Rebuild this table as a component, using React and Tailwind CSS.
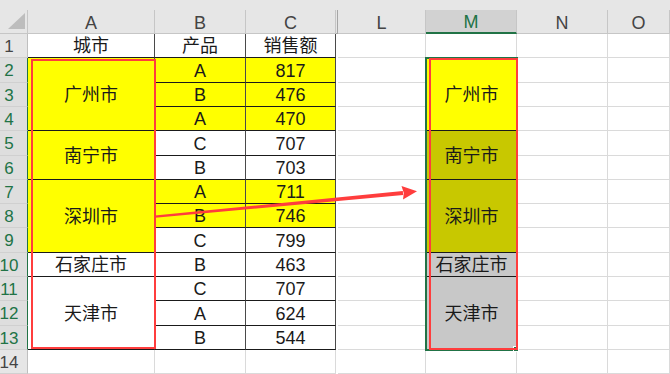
const H = {
  24: 'h-[24px]',
  25: 'h-[25px]',
  49: 'h-[49px]',
  73: 'h-[73px]',
};

const rowHeights = [24, 25, 24, 24, 25, 24, 24, 24, 25, 24, 24, 25, 24, 24];

const BG = {
  white: 'bg-white',
  yellow: 'bg-[#ffff00]',
  olive: 'bg-[#c8c800]',
  gray: 'bg-[#c8c8c8]',
};

const cityA = [
  { h: 24, text: '城市', bg: 'white' },
  { h: 73, text: '广州市', bg: 'yellow' },
  { h: 49, text: '南宁市', bg: 'yellow' },
  { h: 73, text: '深圳市', bg: 'yellow' },
  { h: 24, text: '石家庄市', bg: 'white' },
  { h: 73, text: '天津市', bg: 'white' },
];

const cityM = [
  { h: 73, text: '广州市', bg: 'yellow' },
  { h: 49, text: '南宁市', bg: 'olive' },
  { h: 73, text: '深圳市', bg: 'olive' },
  { h: 24, text: '石家庄市', bg: 'gray' },
  { h: 73, text: '天津市', bg: 'gray' },
];

const sales = [
  ['产品', '销售额', 'white'],
  ['A', '817', 'yellow'],
  ['B', '476', 'yellow'],
  ['A', '470', 'yellow'],
  ['C', '707', 'white'],
  ['B', '703', 'white'],
  ['A', '711', 'yellow'],
  ['B', '746', 'yellow'],
  ['C', '799', 'white'],
  ['B', '463', 'white'],
  ['C', '707', 'white'],
  ['A', '624', 'white'],
  ['B', '544', 'white'],
];

const ColHeader = ({ label, active }) => (
  <div
    className={
      active
        ? 'flex h-[24px] items-center justify-center border-b-2 border-r border-b-[#217346] border-r-[#c6c6c6] bg-[#d2d2d2] pt-[3px] text-[18px] text-[#217346]'
        : 'flex h-[24px] items-center justify-center border-b border-r border-[#c6c6c6] bg-[#e6e6e6] pt-[3px] text-[18px] text-[#444]'
    }
  >
    {label}
  </div>
);

const Blank = ({ h }) => <div className={`${H[h]} border-b border-r border-[#dadada] bg-white`} />;

const BlankColumn = ({ label, width }) => (
  <div className={`flex ${width} flex-col`}>
    <ColHeader label={label} />
    {rowHeights.map((h, i) => (
      <Blank key={i} h={h} />
    ))}
  </div>
);

const TableCell = ({ h, bg, children }) => (
  <div
    className={`flex ${H[h]} ${BG[bg]} items-center justify-center border-b border-r border-b-[#1a1a1a] border-r-[#4a4a4a] pt-[2px] text-[18px] text-[#1a1a1a]`}
  >
    {children}
  </div>
);

export default function App() {
  return (
    <div className="relative h-[374px] w-[670px] overflow-hidden bg-white font-['Liberation_Sans','Noto_Sans_CJK_SC',sans-serif]">
      <div className="h-[10px] bg-[#e6e6e6]" />
      <div className="flex">
        {/* row numbers */}
        <div className="flex w-[28px] flex-col">
          <div className="h-[24px] border-b border-r border-[#c6c6c6] bg-[#e6e6e6]">
            <svg width="28" height="24" viewBox="0 0 28 24">
              <polygon points="8,19 25,3 25,19" fill="#bdbdbd" />
            </svg>
          </div>
          {rowHeights.map((h, i) => {
            const on = i >= 1 && i <= 12;
            return (
              <div
                key={i}
                className={
                  on
                    ? `flex ${H[h]} items-center justify-center border-b border-r border-b-[#d0d0d0] border-r-[#217346] bg-[#dedede] pr-[9px] pt-[2px] text-[17px] text-[#217346]`
                    : `flex ${H[h]} items-center justify-center border-b border-r border-b-[#d0d0d0] border-r-[#bfbfbf] bg-[#e6e6e6] pr-[9px] pt-[2px] text-[17px] text-[#444]`
                }
              >
                {i + 1}
              </div>
            );
          })}
        </div>

        {/* A */}
        <div className="flex w-[127px] flex-col">
          <ColHeader label="A" />
          {cityA.map((c, i) => (
            <TableCell key={i} h={c.h} bg={c.bg}>
              {c.text}
            </TableCell>
          ))}
          <Blank h={24} />
        </div>

        {/* B */}
        <div className="flex w-[91px] flex-col">
          <ColHeader label="B" />
          {sales.map((r, i) => (
            <TableCell key={i} h={rowHeights[i]} bg={r[2]}>
              {r[0]}
            </TableCell>
          ))}
          <Blank h={24} />
        </div>

        {/* C */}
        <div className="flex w-[90px] flex-col">
          <ColHeader label="C" />
          {sales.map((r, i) => (
            <TableCell key={i} h={rowHeights[i]} bg={r[2]}>
              {r[1]}
            </TableCell>
          ))}
          <Blank h={24} />
        </div>

        {/* hidden D:K */}
        <div className="flex w-[2px] flex-col">
          <div className="h-[24px] border-b border-r border-[#a6a6a6] bg-[#e6e6e6]" />
        </div>

        <BlankColumn label="L" width="w-[88px]" />

        {/* M */}
        <div className="flex w-[91px] flex-col">
          <ColHeader label="M" active />
          <Blank h={24} />
          {cityM.map((c, i) => (
            <div
              key={i}
              className={`flex ${H[c.h]} ${BG[c.bg]} items-center justify-center border-b border-b-[#1a1a1a] pt-[2px] text-[18px] text-[#1a1a1a]`}
            >
              {c.text}
            </div>
          ))}
          <Blank h={24} />
        </div>

        <BlankColumn label="N" width="w-[91px]" />
        <BlankColumn label="O" width="w-[62px]" />
      </div>

      {/* selection + annotations */}
      <div className="absolute left-[425px] top-[57px] h-[294px] w-[93px] border-2 border-[#217346]" />
      <div className="absolute left-[513px] top-[346px] h-[6px] w-[6px] border border-white bg-[#217346]" />
      <div className="absolute left-[31px] top-[59px] h-[290px] w-[125px] border-2 border-[#ff3d3d]" />
      <div className="absolute left-[429px] top-[58px] h-[292px] w-[89px] border-2 border-[#ff3d3d]" />
      <svg className="pointer-events-none absolute left-0 top-0" width="670" height="374" viewBox="0 0 670 374">
        <polygon points="154.9,215.6 402.8,190.9 403.2,195.1 155.1,217.8" fill="#ff3d3d" />
        <polygon points="417,191.2 401.5,186 403.8,193 403,199.5" fill="#ff3d3d" />
      </svg>
    </div>
  );
}
